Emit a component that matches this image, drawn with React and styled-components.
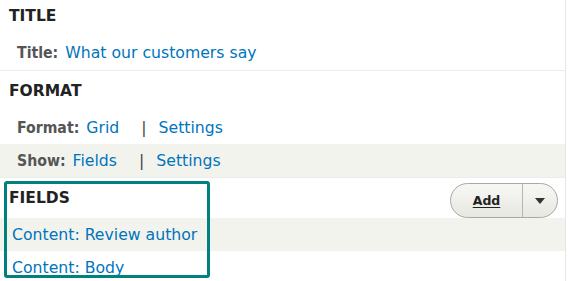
import React from "react";
import styled, { createGlobalStyle } from "styled-components";

const Global = createGlobalStyle`
  html, body { margin: 0; padding: 0; background: #fff; }
  body { font-family: "DejaVu Sans", "Liberation Sans", sans-serif; }
`;

const Page = styled.div`
  position: relative;
  width: 565px;
  height: 281px;
  overflow: hidden;
  border-right: 1px solid #e6e6e6;
`;

const Bucket = styled.section`
  border-bottom: 1px solid #ececec;
  padding-bottom: ${(p) => p.$pb || 0}px;
  margin-top: ${(p) => p.$mt || 0}px;
`;

const Heading = styled.div`
  height: 40px;
  display: flex;
  align-items: center;
  justify-content: space-between;
  padding: 0 7px 0 9px;
  font-weight: bold;
  font-size: 15.5px;
  color: #222;
  text-transform: uppercase;
`;

const Row = styled.div`
  height: 33px;
  display: flex;
  align-items: center;
  padding-left: ${(p) => p.$indent ?? 17}px;
  background: ${(p) => (p.$shaded ? "#f3f3ed" : "transparent")};
  font-size: 15.7px;
  white-space: nowrap;
`;

const Label = styled.span`
  font-family: "DejaVu Sans Condensed", "DejaVu Sans", sans-serif;
  font-stretch: condensed;
  font-weight: bold;
  color: #555;
  margin-right: 7px;
`;

const Link = styled.a`
  color: #0074bd;
  text-decoration: none;
`;

const Sep = styled.span`
  color: #444;
  margin: 0 12px 0 22px;
`;

const SplitButton = styled.div`
  display: flex;
  height: 33px;
  border: 1px solid #a8a8a8;
  border-radius: 18px;
  background: linear-gradient(#f7f7f4, #e8e8e2);
  overflow: hidden;
  margin-top: 5px;
`;

const AddButton = styled.button`
  width: 71px;
  border: 0;
  background: transparent;
  font-family: "DejaVu Sans", sans-serif;
  font-weight: bold;
  font-size: 12.5px;
  color: #222;
  text-decoration: underline;
  text-underline-offset: 2px;
  text-transform: none;
  padding: 0;
`;

const Toggle = styled.button`
  width: 35px;
  border: 0;
  border-left: 1px solid #b5b5b5;
  background: transparent;
  display: flex;
  align-items: center;
  justify-content: center;
  padding: 0;
`;

const Arrow = styled.span`
  width: 0;
  height: 0;
  border-left: 5px solid transparent;
  border-right: 5px solid transparent;
  border-top: 6px solid #333;
`;

const Highlight = styled.div`
  position: absolute;
  left: 4px;
  top: 181px;
  width: 200px;
  height: 91px;
  border: 3px solid #00807e;
  border-radius: 3px;
  pointer-events: none;
`;

export default function App() {
  return (
    <>
      <Global />
      <Page>
        <Bucket $mt={-4} $pb={1}>
          <Heading>Title</Heading>
          <Row>
            <Label>Title:</Label>
            <Link href="#">What our customers say</Link>
          </Row>
        </Bucket>
        <Bucket>
          <Heading>Format</Heading>
          <Row>
            <Label>Format:</Label>
            <Link href="#">Grid</Link>
            <Sep>|</Sep>
            <Link href="#">Settings</Link>
          </Row>
          <Row $shaded>
            <Label>Show:</Label>
            <Link href="#">Fields</Link>
            <Sep>|</Sep>
            <Link href="#">Settings</Link>
          </Row>
        </Bucket>
        <Bucket>
          <Heading>
            <span>Fields</span>
            <SplitButton>
              <AddButton>Add</AddButton>
              <Toggle aria-label="More">
                <Arrow />
              </Toggle>
            </SplitButton>
          </Heading>
          <Row $shaded $indent={12}>
            <Link href="#">Content: Review author</Link>
          </Row>
          <Row $indent={12}>
            <Link href="#">Content: Body</Link>
          </Row>
        </Bucket>
        <Highlight />
      </Page>
    </>
  );
}
